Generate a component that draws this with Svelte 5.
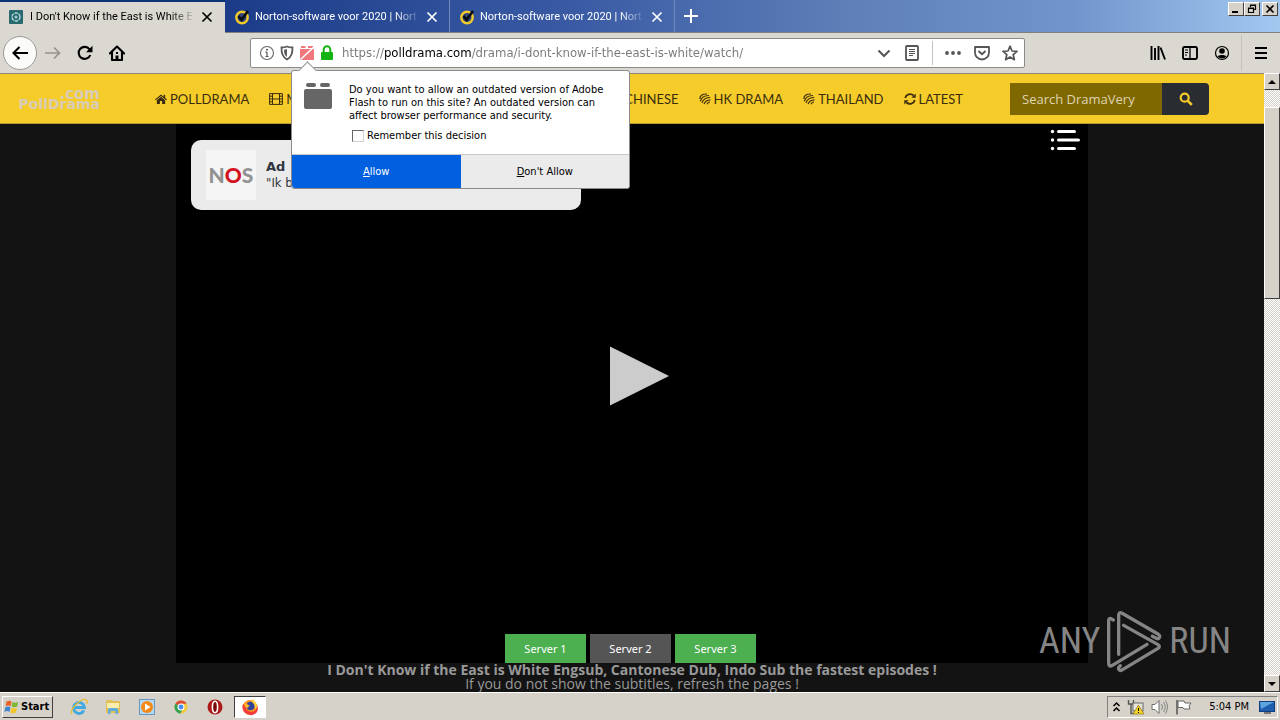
<script>
  let address = $state('https://polldrama.com/drama/i-dont-know-if-the-east-is-white/watch/');
  let query = $state('');
  let remember = $state(false);
  const tabs = [
    { title: "I Don't Know if the East is White E", active: true },
    { title: 'Norton-software voor 2020 | Nort', active: false },
    { title: 'Norton-software voor 2020 | Nort', active: false }
  ];
  const links = [
    { label: 'CHINESE', icon: 'leaf' },
    { label: 'HK DRAMA', icon: 'leaf' },
    { label: 'THAILAND', icon: 'leaf' },
    { label: 'LATEST', icon: 'refresh' }
  ];
  const servers = ['Server 1', 'Server 2', 'Server 3'];
  let current = $state(1);
</script>

<div class="desktop">
  <header class="titlebar">
    <div class="tabs">
      {#each tabs as tab}
        <div class="tab" class:active={tab.active}>
          {#if tab.active}
            <svg width="14" height="14" viewBox="0 0 14 14"><rect width="14" height="14" rx="1" fill="#28686f" /><circle cx="7" cy="7" r="4" fill="none" stroke="#b9dcdc" stroke-width="1.3" stroke-dasharray="3.4 .8" /><circle cx="7" cy="7" r="1.6" fill="#9cc9cc" /></svg>
          {:else}
            <svg width="16" height="16" viewBox="0 0 16 16"><circle cx="8" cy="8.5" r="5.7" fill="#33477c" stroke="#f2cb2b" stroke-width="2.4" /><path d="M4.6 7.2l3 3.6L14 2" fill="none" stroke="#0b0d14" stroke-width="2.6" /></svg>
          {/if}
          <span class="title">{tab.title}</span>
          <button class="plain" aria-label="Close tab"><svg width="12" height="12" viewBox="0 0 12 12"><path d="M1.5 1.5l9 9m0-9l-9 9" stroke="currentColor" stroke-width="1.7" /></svg></button>
        </div>
      {/each}
      <button class="plain newtab" aria-label="New tab"><svg width="14" height="14" viewBox="0 0 14 14"><path d="M7 0v14M0 7h14" stroke="#fff" stroke-width="2" /></svg></button>
    </div>
    <div class="winbtns">
      <button aria-label="Minimize"><svg width="10" height="10" viewBox="0 0 10 10"><path d="M1 8h6" stroke="#000" stroke-width="2" /></svg></button>
      <button aria-label="Restore"><svg width="10" height="10" viewBox="0 0 10 10"><path d="M3.5 3V1h5v4.5H7M3 1.5h6M1.5 4h5v4.5h-5zM1 4.5h6" fill="none" stroke="#000" stroke-width="1.2" /></svg></button>
      <button class="close" aria-label="Close"><svg width="10" height="10" viewBox="0 0 10 10"><path d="M1.5 1.5l7 7m0-7l-7 7" stroke="#000" stroke-width="1.7" /></svg></button>
    </div>
  </header>

  <div class="toolbar">
    <div class="history">
      <button class="plain back" aria-label="Back"><svg width="18" height="18" viewBox="0 0 18 18"><path d="M17 9H2.5M8.5 3l-6 6 6 6" fill="none" stroke="#000" stroke-width="2.1" /></svg></button>
      <button class="plain" aria-label="Forward"><svg width="16" height="16" viewBox="0 0 16 16"><path d="M0 8h14M9 2.5L14.5 8 9 13.5" fill="none" stroke="#96938f" stroke-width="1.7" /></svg></button>
      <button class="plain" aria-label="Reload"><svg width="16" height="16" viewBox="0 0 16 16"><path d="M13.3 10A6 6 0 1 1 12.5 4.3" fill="none" stroke="#000" stroke-width="2.1" /><path d="M15.5 .8v6.500H9z" /></svg></button>
      <button class="plain" aria-label="Home"><svg width="16" height="16" viewBox="0 0 16 16"><path d="M.8 8.5L8 1.500l7.200 7M3 7v8h10V7" fill="none" stroke="#000" stroke-width="2.1" stroke-linejoin="round" stroke-linecap="round" /><path d="M6.500 15v-4.500h3V15z" /><path d="M7 7h2v2H7z" /></svg></button>
    </div>

    <div class="urlbar">
      <svg width="16" height="16" viewBox="0 0 16 16"><circle cx="8" cy="8" r="6.5" fill="none" stroke="#666" stroke-width="1.1" /><path d="M8 7v4.500M6.500 7.200H8M6.500 11.500h3" fill="none" stroke="#555" stroke-width="1.2" /><circle cx="8" cy="4.7" r="1" fill="#555" /></svg>
      <svg width="16" height="16" viewBox="0 0 16 16"><path d="M8 1.500c2 1 4 1 5.500 1 0 5-.5 9-5.500 12C3 11.500 2.500 7.500 2.500 2.500c1.500 0 3.500 0 5.500-1z" fill="none" stroke="#5b5b5f" stroke-width="1.8" /><path d="M8 4v8C5.500 10 5 8 5 4.700 6 4.700 7 4.500 8 4z" fill="#5b5b5f" /></svg>
      <div class="flash">
        <svg width="16" height="16" viewBox="0 0 16 16"><path d="M2 1h4.500v2H2zM9 1h5v2H9zM1 4h14v11H1z" fill="#f0787c" /><path d="M1.500 14.500L15 2" stroke="#fff" stroke-width="1.6" /></svg>
        <div class="popup" role="dialog" aria-label="Plugin permission">
          <div class="ask">
            <svg class="brick" width="28" height="28" viewBox="0 0 28 28"><rect x="2" y="1" width="10" height="4" rx="2" fill="#666" /><rect x="16" y="1" width="10" height="4" rx="2" fill="#666" /><rect y="7" width="28" height="20" rx="2" fill="#666" /></svg>
            <div class="message">
              <p>Do you want to allow an outdated version of Adobe<br />Flash to run on this site? An outdated version can<br />affect browser performance and security.</p>
              <label><input type="checkbox" bind:checked={remember} />Remember this decision</label>
            </div>
          </div>
          <div class="choices">
            <button class="allow"><u>A</u>llow</button>
            <button><u>D</u>on't Allow</button>
          </div>
        </div>
      </div>
      <svg width="16" height="16" viewBox="0 0 16 16"><path d="M4.700 7V4.500a3.300 3.300 0 0 1 6.600 0V7" fill="none" stroke="#12b312" stroke-width="2" /><rect x="2" y="7" width="12" height="8" rx="1" fill="#12b312" /></svg>
      <input class="address" aria-label="Address" bind:value={address} />
      <button class="plain" aria-label="History"><svg width="16" height="16" viewBox="0 0 16 16"><path d="M2.500 5.500L8 11l5.500-5.500" fill="none" stroke="#555" stroke-width="2" /></svg></button>
      <button class="plain reader" aria-label="Reader view"><svg width="16" height="16" viewBox="0 0 16 16"><rect x="2" y="1" width="12" height="14" rx="1" fill="none" stroke="#555" stroke-width="1.8" /><path d="M5 4.500h6M5 6.500h6M5 8.500h6M5 10.500h4" stroke="#555" /></svg></button>
      <span class="divider"></span>
      <button class="plain" aria-label="Page actions"><svg width="18" height="16" viewBox="0 0 18 16" fill="#555"><circle cx="3" cy="8" r="1.9" /><circle cx="9" cy="8" r="1.9" /><circle cx="15" cy="8" r="1.9" /></svg></button>
      <button class="plain" aria-label="Pocket"><svg width="16" height="16" viewBox="0 0 16 16"><path d="M1 2h14v5.500a7 7 0 0 1-14 0z" fill="none" stroke="#555" stroke-width="1.8" stroke-linejoin="round" /><path d="M4.500 6L8 9.300 11.500 6" fill="none" stroke="#555" stroke-width="1.9" /></svg></button>
      <button class="plain" aria-label="Bookmark"><svg width="16" height="16" viewBox="0 0 16 16"><path d="M8 1.200l2 4.800 5 .4-3.800 3.300 1.200 5L8 12l-4.400 2.700 1.200-5L1 6.400 6 6z" fill="none" stroke="#555" stroke-width="1.7" stroke-linejoin="round" /></svg></button>
    </div>

    <div class="tools">
      <button class="plain" aria-label="Library"><svg width="16" height="16" viewBox="0 0 16 16"><path d="M1.500 1v14M5 3v12M8.500 1v14M10.500 2.500L15 14.500" stroke="#000" stroke-width="1.9" /></svg></button>
      <button class="plain" aria-label="Sidebars"><svg width="16" height="16" viewBox="0 0 16 16"><rect x="1" y="2" width="14" height="12" rx="1.5" fill="none" stroke="#000" stroke-width="1.9" /><path d="M8 2v12" stroke="#000" stroke-width="1.3" /><path d="M3 5h3M3 7.500h3M3 10h2" stroke="#000" /></svg></button>
      <button class="plain" aria-label="Account"><svg width="16" height="16" viewBox="0 0 16 16"><circle cx="8" cy="8" r="6.5" fill="none" stroke="#000" stroke-width="1.2" /><circle cx="8" cy="6" r="2.8" /><path d="M3.500 11.500C5 9.500 11 9.500 12.500 11.500 10 14 6 14 3.500 11.500z" /></svg></button>
      <span class="divider"></span>
      <button class="plain" aria-label="Menu"><svg width="14" height="16" viewBox="0 0 14 16"><path d="M1 3h12M1 8h12M1 13h12" stroke="#000" stroke-width="2" /></svg></button>
    </div>
  </div>

  <div class="viewport">
    <div class="page">
      <div class="siteheader">
        <a class="brand" href="#home"><span>.com</span><span>PollDrama</span></a>
        <nav>
          <a href="#polldrama"><svg width="12" height="12" viewBox="0 0 13 12"><path d="M6.500 1L0 6.500l.8.9L6.500 2.700l5.700 4.700.8-.9L11 4.700V1.500H9.400v2zM2 7.300V11.500h3.300V8.300h2.400v3.200H11V7.300L6.500 3.600z" /></svg>POLLDRAMA</a>
          <a href="#movies"><svg width="14" height="12" viewBox="0 0 14 12"><path d="M.6.6h12.800v10.800H.6zM3.500.6v10.800M10.500.6v10.800M3.500 6h7M.6 3.200h2.900M.6 6h2.900M.6 8.800h2.900M10.500 3.200h2.900M10.500 6h2.900M10.500 8.800h2.900" fill="none" stroke="currentColor" stroke-width="1" /></svg>MOVIES</a>
          <span class="spacer"></span>
          {#each links as link}
            <a href={'#' + link.label}>
              {#if link.icon === 'leaf'}
                <svg width="12" height="12" viewBox="0 0 12 12"><path d="M.8 6C.8 2.500 4 .8 8 1M1.300 8.200C2.500 4.500 5.500 2.500 10 2.500M3 9.800C4 6.500 7 4.500 11.300 4.500M5 11c1-2.500 3-4 6.500-4.200M8 11.200c.5-1 1.500-2 3-2.200" fill="none" stroke="currentColor" stroke-width="1.2" /></svg>
              {:else}
                <svg width="12" height="12" viewBox="0 0 12 12"><path d="M1.200 5A5 5 0 0 1 9.500 2.500M10.800 7A5 5 0 0 1 2.500 9.500" fill="none" stroke="currentColor" stroke-width="1.8" /><path d="M11.700.5v4.300H7.400zM.3 11.500V7.200h4.300z" /></svg>
              {/if}{link.label}</a>
          {/each}
        </nav>
        <form class="search" onsubmit={(e) => e.preventDefault()}>
          <input aria-label="Search" placeholder="Search DramaVery" bind:value={query} />
          <button aria-label="Search"><svg width="14" height="14" viewBox="0 0 14 14"><circle cx="5.7" cy="5.7" r="4" fill="none" stroke="#f5cc2a" stroke-width="2.2" /><path d="M8.800 8.800l4 4" stroke="#f5cc2a" stroke-width="2.6" /></svg></button>
        </form>
      </div>

      <main>
        <div class="player">
          <div class="ad">
            <div class="nos"><span>N</span><span class="red">O</span><span>S</span></div>
            <div><b>Ad ·</b><br />"Ik ben</div>
          </div>
          <button class="plain list" aria-label="Playlist"><svg width="30" height="22" viewBox="0 0 30 22"><path d="M8.500 2.500h16M8.500 11h20M8.500 19.500h16" stroke="#fff" stroke-width="3" stroke-linecap="round" /><g fill="#fff"><circle cx="2.500" cy="2.500" r="1.700" /><circle cx="2.500" cy="11" r="1.700" /><circle cx="2.500" cy="19.500" r="1.700" /></g></svg></button>
          <button class="plain play" aria-label="Play"><svg width="60" height="60" viewBox="0 0 60 60"><path d="M1 .5L60 30 1 59.500z" fill="#ccc" /></svg></button>
          <div class="servers">
            {#each servers as name, i}
              <button class:current={i === current} onclick={() => (current = i)}>{name}</button>
            {/each}
          </div>
        </div>
        <p class="caption"><b>I Don't Know if the East is White Engsub, Cantonese Dub, Indo Sub the fastest episodes !</b><br />If you do not show the subtitles, refresh the pages !</p>
      </main>

      <div class="watermark">
        <span>ANY</span>
        <svg width="55" height="63" viewBox="30 12 165 189"><g fill="none" stroke="currentColor" stroke-width="10" stroke-linejoin="round" stroke-linecap="round"><path d="M49 42l-7-4q-7-2-7 7v126q0 13 11 7L150 115" /><path d="M65 145V28q0-10 9-7L183 84q8 6 4 11-3 5-9 2l-12-6" /><path d="M80 58L183 116q8 5 0 11L78 190q-8 6-12 1-4-6 4-12" /></g></svg>
        <span>RUN</span>
      </div>
    </div>
    <div class="scrollbar">
      <button aria-label="Scroll up"><svg width="8" height="4" viewBox="0 0 8 4"><path d="M4 0l4 4H0z" /></svg></button>
      <div class="thumb"></div>
      <button class="down" aria-label="Scroll down"><svg width="8" height="4" viewBox="0 0 8 4"><path d="M4 4l4-4H0z" /></svg></button>
    </div>
  </div>

  <footer class="taskbar">
    <button class="start"><svg width="16" height="16" viewBox="0 0 16 16"><path d="M2.500 2.500q3-1.700 5 0L6.600 7.200q-2.200-1.500-5 0z" fill="#e8642a" /><path d="M8.400 3q3 1.400 5.800 0l-1 4.600q-2.800 1.500-5.600 0z" fill="#7fb737" /><path d="M1.400 8.300q2.800-1.500 5 0l-1 4.600q-2.200-1.600-5 0z" fill="#3c86d2" /><path d="M7.300 8.700q3 1.500 5.600 0l-1 4.700q-2.800 1.500-5.600 0z" fill="#f5c52c" /></svg>Start</button>
    <div class="launch">
      <button class="plain" aria-label="Internet Explorer"><svg width="18" height="18" viewBox="0 0 18 18"><path d="M14 12.300A5.500 5.500 0 1 1 14.500 9.500H5" fill="none" stroke="#41a9e0" stroke-width="2.8" /><path d="M2 16C-1 11 12-1 16.500 2q1.500 1 0 4" fill="none" stroke="#e6bd38" stroke-width="1.4" /></svg></button>
      <button class="plain" aria-label="Explorer"><svg width="18" height="18" viewBox="0 0 18 18"><path d="M2 2h6l1 1h7v12H2z" fill="#e3bf58" /><path d="M3 5h12v5H3z" fill="#fbedae" /><path d="M4 16v-4q0-2 2-2h6q2 0 2 2v4h-2.500v-3h-5v3z" fill="#5fabd9" /></svg></button>
      <button class="plain" aria-label="Media Player"><svg width="18" height="18" viewBox="0 0 18 18"><rect x="1.500" y="1.500" width="15" height="15" fill="#b8d8f2" stroke="#6499c5" /><circle cx="9" cy="9" r="6" fill="#f28a19" /><path d="M7 5.500L12.500 9 7 12.500z" fill="#fff" /></svg></button>
      <button class="plain" aria-label="Chrome"><svg width="18" height="18" viewBox="0 0 18 18"><circle cx="9" cy="9" r="6.500" fill="#f3c935" /><path d="M9 9L3.400 5.700A6.500 6.500 0 0 1 14.600 5.700H9z" fill="#dc4937" /><path d="M9 9L3.400 5.700A6.500 6.500 0 0 0 8.500 15.500L11 10z" fill="#31a055" /><circle cx="9" cy="9" r="3" fill="#4a8bf5" stroke="#fff" stroke-width="1.100" /></svg></button>
      <button class="plain" aria-label="Opera"><svg width="18" height="18" viewBox="0 0 18 18"><circle cx="9" cy="9" r="7.500" fill="#ad1818" /><ellipse cx="9" cy="9" rx="2.600" ry="5.700" fill="#7a0909" stroke="#fff" stroke-width="1.600" /></svg></button>
      <button class="running" aria-label="Firefox"><svg width="18" height="18" viewBox="0 0 18 18"><circle cx="9" cy="9.500" r="7.500" fill="#ff9420" /><path d="M2 6q-2 7 4 10t10-2q1.500-3 0-7 0 7-6 7-6-1-5-6z" fill="#f13b3d" /><circle cx="9.500" cy="8" r="4.300" fill="#30439b" /><path d="M3 4.500q1 1.500 3 1.500l3 2q-2 0-2 2-2-1-3-.5z" fill="#ffb62b" /><path d="M11 1q5 3 5 8l-2 2q0-5-3-7z" fill="#ffd33c" /></svg></button>
    </div>
    <div class="tray">
      <svg width="9" height="12" viewBox="0 0 9 12"><path d="M1.500 5l3-3 3 3M1.500 10l3-3 3 3" fill="none" stroke="#000" stroke-width="1.5" /></svg>
      <svg width="18" height="16" viewBox="0 0 18 16"><path d="M1.500 1v4h5V1M4 5v9.500h3" fill="none" stroke="#555" stroke-width="1.4" /><rect x="6" y="4" width="10" height="8" fill="#e8e5dd" stroke="#666" /><path d="M11.500 6L17 15H6z" fill="#f5d229" stroke="#917811" stroke-width=".7" /><path d="M11.500 9v3M11.500 13v1" stroke="#000" /></svg>
      <svg width="18" height="16" viewBox="0 0 18 16"><path d="M1 5.500h3l4-4v13l-4-4H1z" fill="#fff" stroke="#6d6d6d" /><path d="M10.500 5q2 3 0 6M12.500 3q3.500 5 0 10M14.500 1.500q4 6.500 0 13" fill="none" stroke="#858585" /></svg>
      <svg width="18" height="16" viewBox="0 0 18 16"><path d="M2 1v14.500" stroke="#555" stroke-width="1.5" /><path d="M3 2h6l1 2h6l-2 3 1 3H9L8 8.500H3z" fill="#fff" stroke="#666" /></svg>
      <time>5:04 PM</time>
      <svg width="16" height="16" viewBox="0 0 16 16"><rect x=".5" y="2.500" width="15" height="10" fill="#1d5fae" stroke="#0e3f7c" /><path d="M1 3h14L2 10z" fill="#5ea4e0" /><path d="M5 14h7" stroke="#777" stroke-width="2" /></svg>
    </div>
  </footer>
</div>

<style>
  :global(body) { margin: 0; }
  .desktop { height: 100vh; display: flex; flex-direction: column; overflow: hidden; font: 11px/13px "DejaVu Sans Condensed", "Noto Sans", sans-serif; color: #000; background: #d6d2ca; }
  button, input { font: inherit; border-radius: 0; box-sizing: border-box; }
  svg { display: block; flex: none; }
  .plain { border: 0; padding: 0; background: none; color: inherit; display: flex; align-items: center; justify-content: center; }
  .titlebar { height: 33px; flex: none; box-sizing: border-box; border-bottom: 1px solid #808080; display: flex; justify-content: space-between; background: linear-gradient(90deg, #1c3c89 18%, #3a5ba4 45%, #5f80b8 67%, #7096cd 84%, #a3c8f0); }
  .tabs { display: flex; color: #fff; }
  .tab { width: 225px; box-sizing: border-box; padding: 1px 11px 0 9px; display: flex; align-items: center; border-right: 1px solid #7189bd; }
  .tab.active { color: #000; background: #dbd8d2; border-top: 2px solid #0c3578; height: 33px; padding-top: 0; border-right: 0; padding-right: 12px; padding-bottom: 2px; }
  .title { flex: 1; margin-left: 5px; margin-right: 5px; font: 11px/18px Roboto, "DejaVu Sans Condensed", sans-serif; overflow: hidden; white-space: nowrap; mask-image: linear-gradient(90deg, #000 84%, transparent); }
  .tab.active .title { margin-left: 7px; }
  .newtab { width: 32px; }
  .winbtns { display: flex; padding: 2px 2px 0 0; }
  .winbtns button, .scrollbar button { width: 16px; height: 14px; padding: 0; background: #d6d2ca; border: 1px solid; border-color: #fff #404040 #404040 #fff; display: flex; align-items: center; justify-content: center; }
  .winbtns .close { margin-left: 2px; }
  .toolbar { height: 40px; flex: none; display: flex; align-items: center; background: #dbd8d2; position: relative; z-index: 2; }
  .history { width: 250px; display: flex; align-items: center; gap: 16px; padding-left: 3px; box-sizing: border-box; }
  .back { width: 34px; height: 34px; border: 1px solid #9a9894; border-radius: 50%; background: #fbfbfa; }
  .history .back + button { margin-left: -8px; }
  .urlbar { flex: 1; height: 30px; box-sizing: border-box; border: 1px solid #8a8a8a; border-radius: 2px; background: #fff; display: flex; align-items: center; gap: 4px; padding: 0 6px 0 8px; }
  .address { flex: 1; min-width: 0; height: 22px; border: 0; padding: 0; margin-left: 3px; outline: 0; font: 13px/22px "DejaVu Sans Condensed", "Noto Sans", sans-serif; color: transparent; background: linear-gradient(90deg, #777 43px, #000 43px, #000 130px, #777 130px); background-clip: text; -webkit-background-clip: text; }
  .urlbar .plain { margin-left: 8px; }
  .divider { width: 1px; height: 24px; background: #c4c2be; }
  .urlbar .divider { margin: 0 -1px 0 8px; }
  .flash { position: relative; }
  .popup { position: absolute; left: -8px; top: 25px; width: 337px; background: #fff; border: 1px solid #8b8b8b; border-radius: 3px; }
  .popup::before { content: ""; position: absolute; left: 9px; top: -7px; width: 12px; height: 12px; background: #fff; border: 1px solid #999; border-width: 1px 0 0 1px; transform: rotate(45deg); }
  .ask { display: flex; gap: 17px; padding: 11px 12px 12px; position: relative; }
  .message p { margin: 0 0 7px; padding-top: 1px; white-space: nowrap; }
  .message label { display: flex; align-items: center; gap: 3px; margin-left: 3px; }
  .message input { appearance: none; width: 12px; height: 12px; margin: 0; background: #fff; border: 1px solid; border-color: #666 #d0d0d0 #d0d0d0 #666; }
  .message input:checked { background: #0060df; }
  .choices { display: flex; border-top: 1px solid #c8c8c8; }
  .choices button { flex: 1; height: 33px; border: 0; background: #ebebeb; color: #000; border-radius: 0 0 3px 0; }
  .choices .allow { background: #0060df; color: #fff; border-radius: 0 0 0 3px; }
  .tools { display: flex; align-items: center; gap: 16px; padding: 0 12px 0 125px; }
  .tools .divider { height: 36px; margin: 0 -4px 0 -5px; }
  .viewport { flex: 1; min-height: 0; display: flex; }
  .page { flex: 1; min-width: 0; position: relative; overflow: hidden; background: #131313; font-family: "Open Sans", sans-serif; }
  .siteheader { height: 51px; box-sizing: border-box; display: flex; align-items: center; padding: 0 55px 0 16px; background: #f5cc2a; border-top: 1px solid #8b8877; border-bottom: 1px solid #b4973b; }
  .brand { width: 139px; flex: none; text-decoration: none; color: #d9ccb6; font: bold 15px/10px "DejaVu Sans", sans-serif; display: grid; }
  .brand span { width: 84px; text-align: right; }
  .brand span + span { font-size: 14px; }
  nav { flex: 1; display: flex; gap: 20px; font: 13px/20px Lato, sans-serif; }
  nav a { display: flex; align-items: center; gap: 3px; color: #3b2c10; text-decoration: none; fill: currentColor; white-space: nowrap; }
  .spacer { flex: 1; }
  .search { display: flex; margin-left: 47px; height: 32px; }
  .search input { width: 152px; border: 0; padding: 0 12px; background: #806800; color: #fff; font-size: 13px; }
  .search input::placeholder { color: #dfd5b0; opacity: 1; }
  .search button { width: 47px; padding: 0; border: 0; border-radius: 0 4px 4px 0; background: #292c31; display: flex; align-items: center; justify-content: center; }
  .player { width: 100%; max-width: 912px; aspect-ratio: 912 / 539; margin: 0 auto; background: #000; position: relative; }
  .ad { position: absolute; left: 15px; top: 16px; width: 390px; height: 70px; box-sizing: border-box; padding: 10px 15px; border-radius: 10px; background: #ebebeb; display: flex; align-items: center; gap: 10px; color: #2f3640; font: 13px/16px "DejaVu Sans Condensed", "Open Sans", sans-serif; }
  .ad b { font-family: "DejaVu Sans", sans-serif; }
  .nos { width: 50px; height: 50px; background: #f5f5f5; display: flex; align-items: center; justify-content: center; font: 900 21px/50px Lato, sans-serif; color: #929292; }
  .nos .red { color: #d3141e; }
  .list { position: absolute; right: 8px; top: 5px; }
  .play { position: absolute; left: 50%; top: 222px; margin-left: -23px; }
  .servers { position: absolute; left: 0; right: 0; bottom: 0; padding-right: 3px; display: flex; justify-content: center; gap: 4px; }
  .servers button { width: 81px; height: 29px; border: 0; padding: 0; background: #4caf50; color: #fff; font: 11px/29px "Noto Sans", sans-serif; }
  .servers .current { background: #555; }
  .caption { margin: 0; text-align: center; color: #999; font-size: 14px; line-height: 14px; }
  .watermark { position: absolute; right: 33px; bottom: 19px; display: flex; align-items: center; gap: 7px; color: #858585; font: 36px/64px "Liberation Sans Narrow", "Roboto Condensed", Roboto, sans-serif; }
  .scrollbar { width: 16px; display: flex; flex-direction: column; background: repeating-conic-gradient(#fff 0 25%, #d6d2ca 0 50%) 0 0 / 2px 2px; }
  .scrollbar button { height: 17px; flex: none; }
  .thumb { height: 31%; margin-top: 17px; box-sizing: border-box; background: #d6d2ca; border: 1px solid; border-color: #fff #404040 #404040 #fff; }
  .scrollbar .down { margin-top: auto; }
  .taskbar { height: 28px; flex: none; box-sizing: border-box; border-top: 1px solid #fff; background: #d6d2ca; display: flex; align-items: center; padding: 0 2px; }
  .start { height: 22px; padding: 0 3px 0 1px; border: 1px solid; border-color: #fff #404040 #404040 #fff; background: #d6d2ca; font: bold 11px/16px "DejaVu Sans Condensed", sans-serif; display: flex; align-items: center; gap: 1px; }
  .launch { display: flex; align-items: center; margin-left: 17px; gap: 16px; }
  .running { width: 32px; height: 22px; margin-left: -6px; padding: 0; border: 1px solid; border-color: #404040 #fff #fff #404040; background: #fff; display: flex; align-items: center; justify-content: center; }
  .tray { margin-left: auto; height: 22px; box-sizing: border-box; display: flex; align-items: center; gap: 6px; padding: 0 2px 0 4px; border: 1px solid; border-color: #808080 #fff #fff #808080; }
  time { margin: 0 4px 0 10px; }
</style>
